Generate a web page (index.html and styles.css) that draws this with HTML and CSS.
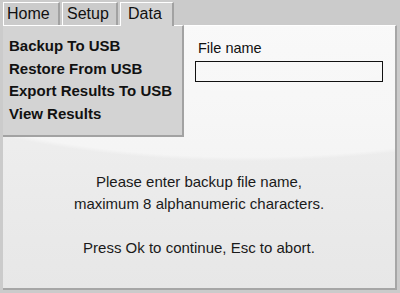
FILE: index.html
```html
<!DOCTYPE html>
<html>
<head>
<meta charset="utf-8">
<link rel="stylesheet" href="styles.css">
</head>
<body>
<div class="screen">
  <div class="tabs">
    <div class="tab tab-home">Home</div>
    <div class="tab tab-setup">Setup</div>
    <div class="tab tab-data active">Data</div>
  </div>
  <div class="panel">
    <ul class="menu">
      <li>Backup To USB</li>
      <li>Restore From USB</li>
      <li>Export Results To USB</li>
      <li>View Results</li>
    </ul>
    <div class="form">
      <div class="label">File name</div>
      <div class="input"></div>
    </div>
    <div class="message">
      <p>Please enter backup file name,<br>maximum 8 alphanumeric characters.</p>
      <p>Press Ok to continue, Esc to abort.</p>
    </div>
  </div>
</div>
</body>
</html>
```
FILE: styles.css
```css
html, body {
  margin: 0;
  padding: 0;
}
body {
  background: #cbcbcb;
  font-family: "Liberation Sans", Arial, sans-serif;
  color: #111;
  width: 400px;
  height: 293px;
  overflow: hidden;
}
.screen {
  padding: 0 3px;
}
.tabs {
  display: flex;
  gap: 2px;
  height: 25px;
  align-items: flex-end;
}
.tab {
  height: 22px;
  line-height: 22px;
  font-size: 16px;
  background: #cbcbcb;
  border-top: 1px solid #ffffff;
  border-left: 1px solid #ffffff;
  border-right: 2px solid #a2a2a2;
  box-sizing: content-box;
  padding-left: 3px;
}
.tab-home { width: 51px; }
.tab-setup { width: 49px; padding-left: 4px; }
.tab-data { width: 44px; padding-left: 7px; }
.tab.active {
  background: #d3d3d3;
  height: 23px;
  margin-bottom: -1px;
  position: relative;
  z-index: 2;
}
.panel {
  position: relative;
  height: 262px;
  border-top: 1px solid #ffffff;
  border-right: 2px solid #a6a6a6;
  border-bottom: 2px solid #a6a6a6;
  background:
    radial-gradient(ellipse 420px 135px at 62% 0%, rgba(255,255,255,0.55) 0%, rgba(255,255,255,0.45) 97%, rgba(255,255,255,0) 100%),
    linear-gradient(#f2f2f2, #e7e7e7);
}
.menu {
  position: absolute;
  left: 0;
  top: -1px;
  width: 173px;
  height: 100px;
  margin: 0;
  padding: 9px 0 0 6px;
  list-style: none;
  background: #d3d3d3;
  border-top: 1px solid #ffffff;
  border-right: 2px solid #a2a2a2;
  border-bottom: 2px solid #a2a2a2;
  z-index: 1;
}
.menu li {
  font-size: 15px;
  font-weight: bold;
  line-height: 22.7px;
  white-space: nowrap;
}
.form {
  margin-left: 192px;
  padding-top: 14px;
}
.label {
  font-size: 14.5px;
  line-height: 16px;
  padding-left: 3px;
}
.input {
  margin-top: 5px;
  width: 186px;
  height: 19px;
  border: 1px solid #111;
}
.message {
  margin-top: 89px;
  text-align: center;
  font-size: 15px;
  line-height: 22px;
  color: #1a1a1a;
}
.message p {
  margin: 0 0 22px 0;
}
```
